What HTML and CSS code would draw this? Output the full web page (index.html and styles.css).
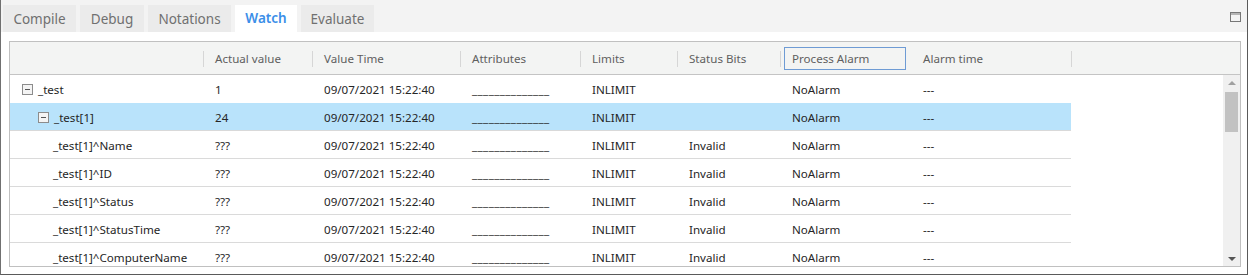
FILE: index.html
```html
<!DOCTYPE html>
<html lang="en">
<head>
    <meta charset="UTF-8">
    <title>Watch</title>
    <link rel="stylesheet" href="styles.css">
</head>
<body>
<div class="frame">
    <div class="tabbar">
        <div class="tab tab-compile">Compile</div>
        <div class="tab tab-debug">Debug</div>
        <div class="tab tab-notations">Notations</div>
        <div class="tab tab-watch active">Watch</div>
        <div class="tab tab-evaluate">Evaluate</div>
        <svg class="maximize" width="11" height="10" viewBox="0 0 11 10">
            <rect x="0.5" y="0.5" width="10" height="9" fill="none" stroke="#777"/>
            <line x1="0" y1="2" x2="11" y2="2" stroke="#777" stroke-width="1"/>
        </svg>
    </div>

    <div class="watch">
        <div class="grid">
            <div class="header row">
                <div class="cell c-name"></div>
                <div class="cell sep">Actual value</div>
                <div class="cell sep">Value Time</div>
                <div class="cell sep">Attributes</div>
                <div class="cell sep">Limits</div>
                <div class="cell sep">Status Bits</div>
                <div class="cell sep"><span class="focus">Process Alarm</span></div>
                <div class="cell">Alarm time</div>
                <div class="cell sep"></div>
            </div>

            <div class="body">
                <div class="rows">
                    <div class="row data first">
                        <div class="cell c-name"><span class="toggle"></span>_test</div>
                        <div class="cell">1</div>
                        <div class="cell">09/07/2021 15:22:40</div>
                        <div class="cell attr">______________</div>
                        <div class="cell">INLIMIT</div>
                        <div class="cell"></div>
                        <div class="cell">NoAlarm</div>
                        <div class="cell">---</div>
                    </div>
                    <div class="row data selected">
                        <div class="cell c-name lvl1"><span class="toggle"></span>_test[1]</div>
                        <div class="cell">24</div>
                        <div class="cell">09/07/2021 15:22:40</div>
                        <div class="cell attr">______________</div>
                        <div class="cell">INLIMIT</div>
                        <div class="cell"></div>
                        <div class="cell">NoAlarm</div>
                        <div class="cell">---</div>
                    </div>
                    <div class="row data">
                        <div class="cell c-name lvl2">_test[1]^Name</div>
                        <div class="cell">???</div>
                        <div class="cell">09/07/2021 15:22:40</div>
                        <div class="cell attr">______________</div>
                        <div class="cell">INLIMIT</div>
                        <div class="cell">Invalid</div>
                        <div class="cell">NoAlarm</div>
                        <div class="cell">---</div>
                    </div>
                    <div class="row data">
                        <div class="cell c-name lvl2">_test[1]^ID</div>
                        <div class="cell">???</div>
                        <div class="cell">09/07/2021 15:22:40</div>
                        <div class="cell attr">______________</div>
                        <div class="cell">INLIMIT</div>
                        <div class="cell">Invalid</div>
                        <div class="cell">NoAlarm</div>
                        <div class="cell">---</div>
                    </div>
                    <div class="row data">
                        <div class="cell c-name lvl2">_test[1]^Status</div>
                        <div class="cell">???</div>
                        <div class="cell">09/07/2021 15:22:40</div>
                        <div class="cell attr">______________</div>
                        <div class="cell">INLIMIT</div>
                        <div class="cell">Invalid</div>
                        <div class="cell">NoAlarm</div>
                        <div class="cell">---</div>
                    </div>
                    <div class="row data">
                        <div class="cell c-name lvl2">_test[1]^StatusTime</div>
                        <div class="cell">???</div>
                        <div class="cell">09/07/2021 15:22:40</div>
                        <div class="cell attr">______________</div>
                        <div class="cell">INLIMIT</div>
                        <div class="cell">Invalid</div>
                        <div class="cell">NoAlarm</div>
                        <div class="cell">---</div>
                    </div>
                    <div class="row data">
                        <div class="cell c-name lvl2">_test[1]^ComputerName</div>
                        <div class="cell">???</div>
                        <div class="cell">09/07/2021 15:22:40</div>
                        <div class="cell attr">______________</div>
                        <div class="cell">INLIMIT</div>
                        <div class="cell">Invalid</div>
                        <div class="cell">NoAlarm</div>
                        <div class="cell">---</div>
                    </div>
                </div>
                <div class="scrollbar">
                    <span class="arrow up"></span>
                    <span class="thumb"></span>
                    <span class="track"></span>
                    <span class="arrow down"></span>
                </div>
            </div>
        </div>
    </div>
</div>
</body>
</html>
```

FILE: styles.css
```css
body {
    margin: 0;
    background-color: #ffffff;
    font-family: "Noto Sans", "Open Sans", sans-serif;
    font-size: 11.6px;
    color: #262626;
}
.frame {
    width: 1246px;
    height: 274px;
    border-left: 1px solid #707070;
    border-right: 1px solid #5a5a5a;
    border-bottom: 1px solid #5a5a5a;
    overflow: hidden;
}
.tabbar {
    display: flex;
    align-items: flex-end;
    gap: 4px;
    height: 32px;
    padding-left: 2px;
    background-color: #f3f3f3;
    position: relative;
}
.tab {
    height: 27px;
    line-height: 29px;
    text-align: center;
    background-color: #ebebeb;
    color: #707070;
    font-size: 13.5px;
}
.tab-compile { width: 73px; }
.tab-debug { width: 64px; }
.tab-notations { width: 83px; }
.tab-watch { width: 62px; }
.tab-evaluate { width: 73px; }
.tab.active {
    background-color: #ffffff;
    color: #3b8ee8;
    font-weight: 600;
    line-height: 26px;
}
.maximize {
    position: absolute;
    right: 6px;
    top: 12px;
}
.watch {
    padding: 9px 6px 0 8px;
}
.grid {
    border: 1px solid #c0c0c0;
    height: 224px;
}
.row {
    display: grid;
    grid-template-columns: 193px 109px 148px 120px 97px 103px 131px 160px 1fr;
}
.header {
    height: 32px;
    background-color: #f3f4f3;
    border-bottom: 1px solid #c4c4c4;
    color: #5f5f5f;
}
.header .cell {
    display: flex;
    align-items: center;
    padding-left: 12px;
    padding-top: 1px;
    position: relative;
}
.header .sep::before {
    content: "";
    position: absolute;
    left: 0;
    top: 9px;
    height: 16px;
    border-left: 1px solid #d6d6d6;
}
.focus {
    margin-left: -8px;
    padding: 3px 7px;
    width: 106px;
    border: 1px solid #6e9bd4;
}
.body {
    display: flex;
    height: 191px;
}
.rows {
    width: 1061px;
    overflow: hidden;
}
.data {
    grid-template-columns: 193px 109px 148px 120px 97px 103px 131px 160px;
    height: 28px;
    border-bottom: 1px solid #dadada;
    box-sizing: border-box;
}
.data.first {
    height: 28px;
    border-bottom-color: #ffffff;
}
.data.selected {
    background-color: #b9e3fb;
    border-bottom-color: #d9d9d9;
}
.data .cell {
    display: flex;
    align-items: center;
    padding-left: 12px;
    padding-top: 2px;
    white-space: nowrap;
}
.data .attr {
    letter-spacing: 0.4px;
}
.data .lvl1 {
    padding-left: 28px;
}
.data .lvl2 {
    padding-left: 43px;
}
.toggle {
    width: 9px;
    height: 9px;
    border: 1px solid #8c8c8c;
    background-color: #f4f4f4;
    margin-right: 5px;
    position: relative;
}
.toggle::after {
    content: "";
    position: absolute;
    left: 2px;
    top: 4px;
    width: 5px;
    border-top: 1px solid #555;
}
.scrollbar {
    margin-left: auto;
    width: 17px;
    background-color: #f0f0f0;
    display: flex;
    flex-direction: column;
    align-items: center;
}
.arrow {
    width: 0;
    height: 0;
    border-left: 4px solid transparent;
    border-right: 4px solid transparent;
}
.arrow.up {
    margin-top: 6px;
    border-bottom: 4px solid #a0a0a0;
}
.arrow.down {
    margin-bottom: 5px;
    border-top: 4px solid #555;
}
.thumb {
    margin-top: 7px;
    width: 13px;
    height: 40px;
    background-color: #c2c2c2;
}
.track {
    flex: 1;
}
```
